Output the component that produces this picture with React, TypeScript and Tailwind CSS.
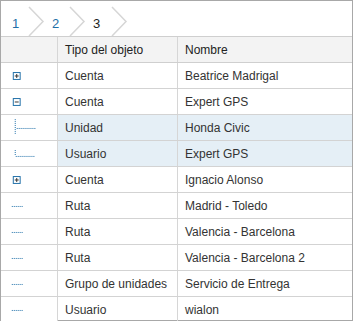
import React from 'react';

type Kind = 'plus' | 'minus' | 'tee' | 'corner' | 'leaf';

type Row = {
  kind: Kind;
  type: string;
  name: string;
  selected?: boolean;
};

const rows: Row[] = [
  { kind: 'plus', type: 'Cuenta', name: 'Beatrice Madrigal' },
  { kind: 'minus', type: 'Cuenta', name: 'Expert GPS' },
  { kind: 'tee', type: 'Unidad', name: 'Honda Civic', selected: true },
  { kind: 'corner', type: 'Usuario', name: 'Expert GPS', selected: true },
  { kind: 'plus', type: 'Cuenta', name: 'Ignacio Alonso' },
  { kind: 'leaf', type: 'Ruta', name: 'Madrid - Toledo' },
  { kind: 'leaf', type: 'Ruta', name: 'Valencia - Barcelona' },
  { kind: 'leaf', type: 'Ruta', name: 'Valencia - Barcelona 2' },
  { kind: 'leaf', type: 'Grupo de unidades', name: 'Servicio de Entrega' },
  { kind: 'leaf', type: 'Usuario', name: 'wialon' },
];

const BLUE = '#1f6fa8';

function TreeIcon({ kind }: { kind: Kind }) {
  if (kind === 'plus' || kind === 'minus') {
    return (
      <svg width="57" height="25" viewBox="0 0 57 25" className="block">
        <rect x="12.5" y="9.5" width="7" height="7" fill="white" stroke={BLUE} strokeWidth="1" />
        <line x1="14" y1="13" x2="18" y2="13" stroke="#333" strokeWidth="1" />
        {kind === 'plus' && <line x1="16" y1="11" x2="16" y2="15" stroke="#333" strokeWidth="1" />}
      </svg>
    );
  }
  if (kind === 'tee') {
    return (
      <svg width="57" height="25" viewBox="0 0 57 25" className="block">
        <line x1="14.5" y1="4" x2="14.5" y2="20" stroke={BLUE} strokeWidth="1" strokeDasharray="1 1" />
        <line x1="16" y1="13.5" x2="35" y2="13.5" stroke={BLUE} strokeWidth="1" strokeDasharray="1 1" />
      </svg>
    );
  }
  if (kind === 'corner') {
    return (
      <svg width="57" height="25" viewBox="0 0 57 25" className="block">
        <line x1="14.5" y1="9" x2="14.5" y2="15" stroke={BLUE} strokeWidth="1" strokeDasharray="1 1" />
        <line x1="15" y1="15.5" x2="35" y2="15.5" stroke={BLUE} strokeWidth="1" strokeDasharray="1 1" />
      </svg>
    );
  }
  return (
    <svg width="57" height="25" viewBox="0 0 57 25" className="block">
      <line x1="11" y1="13.5" x2="22" y2="13.5" stroke={BLUE} strokeWidth="1" strokeDasharray="1 1" />
    </svg>
  );
}

function Chevron() {
  return (
    <svg width="18" height="35" viewBox="0 0 18 35" className="block shrink-0">
      <polyline points="1,6 15,20.5 1,35" fill="none" stroke="#d6d6d6" strokeWidth="1.5" />
    </svg>
  );
}

export default function App() {
  return (
    <div
      className="w-[353px] h-[321px] border border-[#a8a8a8] bg-white flex flex-col text-[12px] text-[#333]"
      style={{ fontFamily: '"Liberation Sans", Arial, sans-serif' }}
    >
      {/* breadcrumb */}
      <div className="h-[36px] shrink-0 border-b border-[#cfcfcf] flex items-start text-[13px]">
        <span className="w-[27px] pl-[11px] pt-[13px] text-[#1f6fa8]">1</span>
        <Chevron />
        <span className="w-[23px] pl-[6px] pt-[13px] text-[#1f6fa8]">2</span>
        <Chevron />
        <span className="w-[24px] pl-[6px] pt-[13px] text-[#222]">3</span>
        <Chevron />
      </div>

      {/* header */}
      <div className="h-[26px] shrink-0 grid grid-cols-[57px_120px_1fr] bg-[#f3f3f3] border-b border-[#cfcfcf] text-[#222]">
        <div className="border-r border-[#d6d6d6]" />
        <div className="border-r border-[#d6d6d6] pl-[7px] flex items-center">Tipo del objeto</div>
        <div className="pl-[7px] flex items-center">Nombre</div>
      </div>

      {/* rows */}
      <div className="flex-1 flex flex-col">
        {rows.map((row, i) => (
          <div
            key={i}
            className={`flex-1 grid grid-cols-[57px_120px_1fr] ${
              i < rows.length - 1 ? 'border-b border-[#d3d3d3]' : ''
            }`}
          >
            <div className="border-r border-[#d6d6d6] bg-white flex items-center">
              <TreeIcon kind={row.kind} />
            </div>
            <div
              className={`border-r border-[#d6d6d6] pl-[7px] flex items-center ${
                row.selected ? 'bg-[#e5eff6]' : ''
              }`}
            >
              {row.type}
            </div>
            <div className={`pl-[7px] flex items-center ${row.selected ? 'bg-[#e5eff6]' : ''}`}>
              {row.name}
            </div>
          </div>
        ))}
      </div>
    </div>
  );
}
